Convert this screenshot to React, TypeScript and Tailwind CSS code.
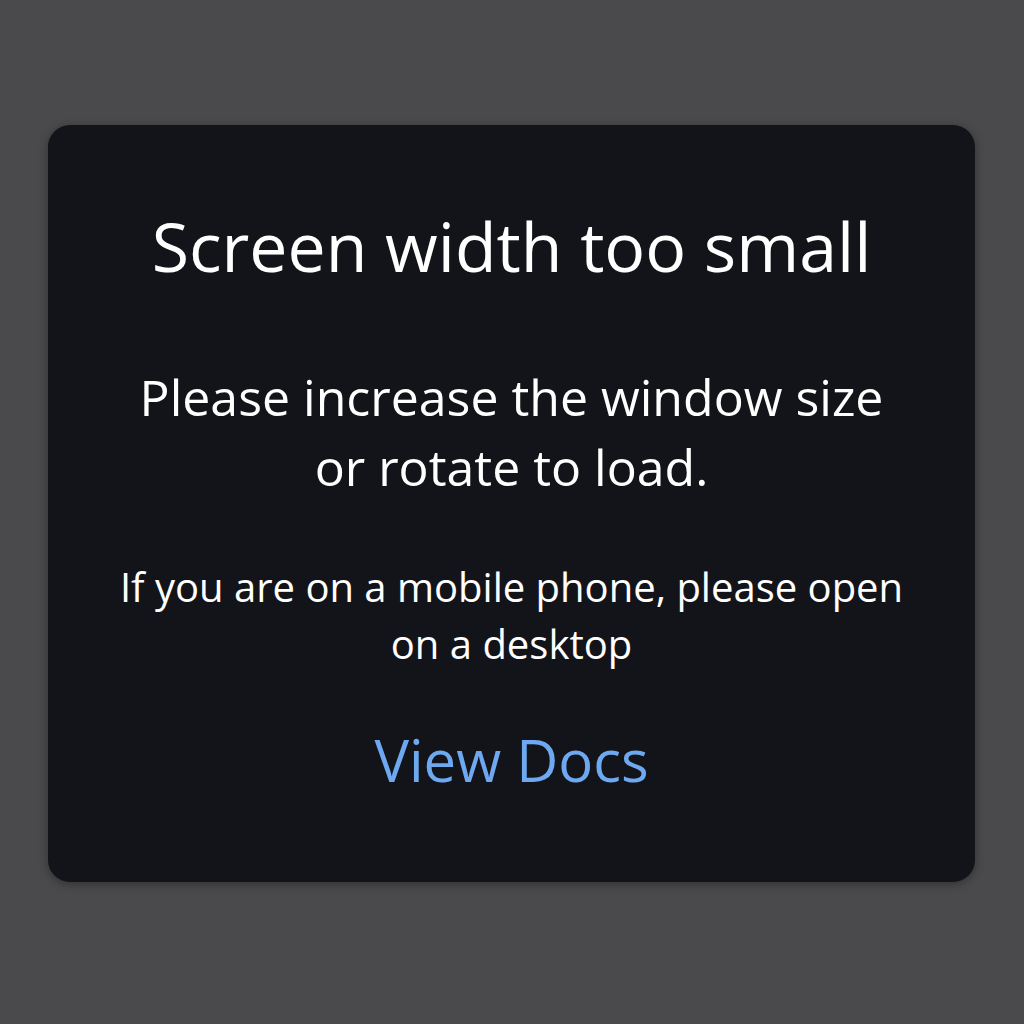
export default function App() {
  return (
    <div
      className="min-h-screen w-full bg-[#4a4a4c] pt-[125px] pl-[48px]"
      style={{ fontFamily: "'Open Sans', 'Noto Sans', sans-serif" }}
    >
      <div className="w-[927px] h-[757px] rounded-[22px] bg-[#131419] shadow-[0_2px_10px_rgba(0,0,0,0.35)] flex flex-col items-center pt-[81px] text-center">
        <h1 className="text-[68px] leading-[80px] text-white font-normal">
          Screen width too small
        </h1>
        <p className="mt-[76px] text-[50px] leading-[70px] text-white">
          Please increase the window size
          <br />
          or rotate to load.
        </p>
        <p className="mt-[56px] text-[40px] leading-[57px] text-white">
          If you are on a mobile phone, please open
          <br />
          on a desktop
        </p>
        <a href="#" className="mt-[56px] text-[58px] leading-[64px] text-[#6ea8f0]">
          View Docs
        </a>
      </div>
    </div>
  );
}
